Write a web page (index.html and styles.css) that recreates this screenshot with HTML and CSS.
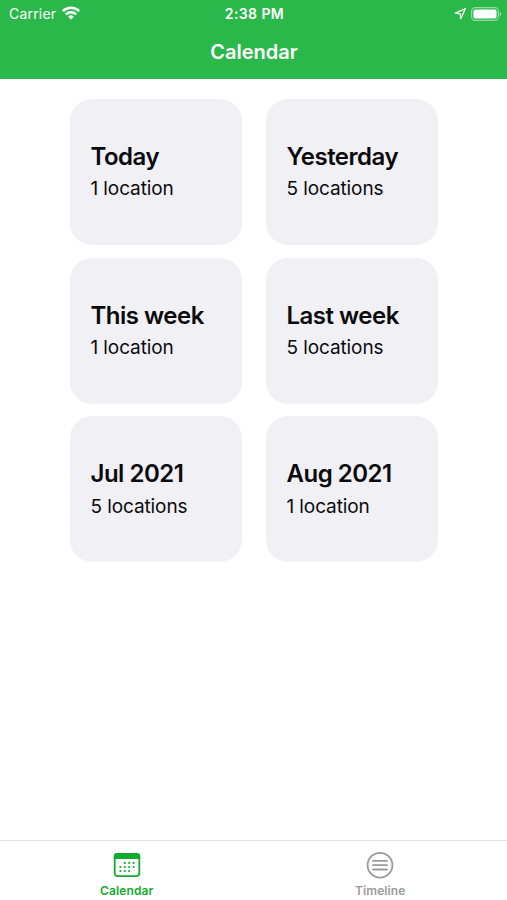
FILE: index.html
```html
<!DOCTYPE html>
<html lang="en">
<head>
  <meta charset="UTF-8" />
  <meta name="viewport" content="width=device-width, initial-scale=1.0"/>
  <title>Calendar</title>
  <link rel="stylesheet" href="styles.css">
</head>
<body>
  <header>
    <div class="status-bar">
      <div class="carrier">
        <span>Carrier</span>
        <svg class="wifi" width="18" height="14" viewBox="0 0 18 14" fill="none" stroke="#fff" stroke-width="2.5">
          <path d="M0.9 5.2a11.5 11.5 0 0 1 16.2 0" />
          <path d="M3.8 8.4a7.4 7.4 0 0 1 10.4 0" />
          <path d="M9 13.6L6.1 10.7a4.1 4.1 0 0 1 5.8 0z" fill="#fff" stroke="none" />
        </svg>
      </div>
      <span class="time">2:38 PM</span>
      <div class="indicators">
        <svg width="13" height="13" viewBox="0 0 13 13" fill="none" stroke="#fff" stroke-width="1.3" stroke-linejoin="round">
          <path d="M11.4 1.6L1.4 6.2l4.9 0.6 0.4 4.9z" />
        </svg>
        <svg width="31" height="14" viewBox="0 0 31 14">
          <rect x="0.6" y="0.6" width="26.8" height="12.8" rx="3.6" fill="none" stroke="#fff" stroke-opacity="0.5" stroke-width="1.1" />
          <rect x="2.4" y="2.4" width="23.2" height="9.2" rx="2" fill="#fff" />
          <path d="M28.7 4.8v4.4a2.4 2.4 0 0 0 0-4.4z" fill="#fff" fill-opacity="0.55" />
        </svg>
      </div>
    </div>
    <h1>Calendar</h1>
  </header>

  <main class="cards">
    <div class="card">
      <h2>Today</h2>
      <p>1 location</p>
    </div>
    <div class="card">
      <h2>Yesterday</h2>
      <p>5 locations</p>
    </div>
    <div class="card">
      <h2>This week</h2>
      <p>1 location</p>
    </div>
    <div class="card">
      <h2>Last week</h2>
      <p>5 locations</p>
    </div>
    <div class="card">
      <h2>Jul 2021</h2>
      <p>5 locations</p>
    </div>
    <div class="card">
      <h2>Aug 2021</h2>
      <p>1 location</p>
    </div>
  </main>

  <nav class="tab-bar">
    <a class="tab active">
      <svg width="28" height="28" viewBox="0 0 28 28">
        <rect x="1.7" y="3" width="24.6" height="22.2" rx="3.2" fill="none" stroke="currentColor" stroke-width="1.8" />
        <path d="M0.8 8V5.4a3.3 3.3 0 0 1 3.3-3.3h19.8a3.3 3.3 0 0 1 3.3 3.3V8z" fill="currentColor" />
        <g fill="currentColor">
          <circle cx="11.8" cy="11.9" r="1.1" /><circle cx="16.2" cy="11.9" r="1.1" /><circle cx="20.6" cy="11.9" r="1.1" />
          <circle cx="7.4" cy="16" r="1.1" /><circle cx="11.8" cy="16" r="1.1" /><circle cx="16.2" cy="16" r="1.1" /><circle cx="20.6" cy="16" r="1.1" />
          <circle cx="7.4" cy="20.1" r="1.1" /><circle cx="11.8" cy="20.1" r="1.1" /><circle cx="16.2" cy="20.1" r="1.1" />
        </g>
      </svg>
      <span>Calendar</span>
    </a>
    <a class="tab">
      <svg width="28" height="28" viewBox="0 0 28 28" fill="none" stroke="currentColor" stroke-width="1.8" stroke-linecap="round">
        <circle cx="14" cy="14.2" r="12.4" />
        <path d="M7 9.9h14M7 14.2h14M7 18.5h14" />
      </svg>
      <span>Timeline</span>
    </a>
  </nav>
</body>
</html>
```

FILE: styles.css
```css
:root {
  --green: #2bb84b;
  --tab-green: #12ab2f;
  --tab-gray: #9a9a9a;
  --card: #f1f0f5;
}

* {
  box-sizing: border-box;
}

body {
  margin: 0;
  height: 100vh;
  display: flex;
  flex-direction: column;
  font-family: Inter, sans-serif;
  background: #fff;
  color: #0b0b0d;
}

header {
  height: 79px;
  background: var(--green);
  color: #fff;
}

.status-bar {
  height: 27px;
  padding: 0 5px 0 7px;
  display: grid;
  grid-template-columns: 1fr auto 1fr;
  align-items: center;
  font-size: 14px;
}

.carrier {
  display: flex;
  align-items: center;
  gap: 6px;
  padding-left: 2px;
  letter-spacing: 0.2px;
}

.wifi {
  margin-top: -2px;
}

.time {
  font-weight: 600;
  font-size: 14px;
  letter-spacing: 0.4px;
}

.indicators {
  display: flex;
  justify-content: flex-end;
  align-items: center;
  gap: 4px;
}

h1 {
  margin: 0;
  padding-left: 1px;
  font-size: 20px;
  font-weight: 600;
  line-height: 51px;
  text-align: center;
}

.cards {
  flex: 1;
  padding: 20px 69px 0 70px;
  display: grid;
  grid-template-columns: 172px 172px;
  grid-auto-rows: 146px;
  align-content: start;
  gap: 12.7px 24px;
}

.card {
  padding: 42px 20px 0 20.5px;
  background: var(--card);
  border-radius: 22px;
}

.card h2 {
  margin: 0;
  font-size: 24px;
  font-weight: 600;
  line-height: 32.2px;
  letter-spacing: -0.5px;
  white-space: nowrap;
}

.card p {
  margin: 0;
  font-size: 19px;
  line-height: 31px;
  letter-spacing: -0.1px;
}

.tab-bar {
  height: 60px;
  display: flex;
  border-top: 1px solid #e2e2e2;
}

.tab {
  flex: 1;
  display: flex;
  flex-direction: column;
  align-items: center;
  padding-top: 10px;
  color: var(--tab-gray);
  font-size: 12px;
  font-weight: 600;
  letter-spacing: 0.1px;
}

.tab span {
  margin-top: 4px;
  line-height: 15px;
}

.tab.active {
  color: var(--tab-green);
}
```
